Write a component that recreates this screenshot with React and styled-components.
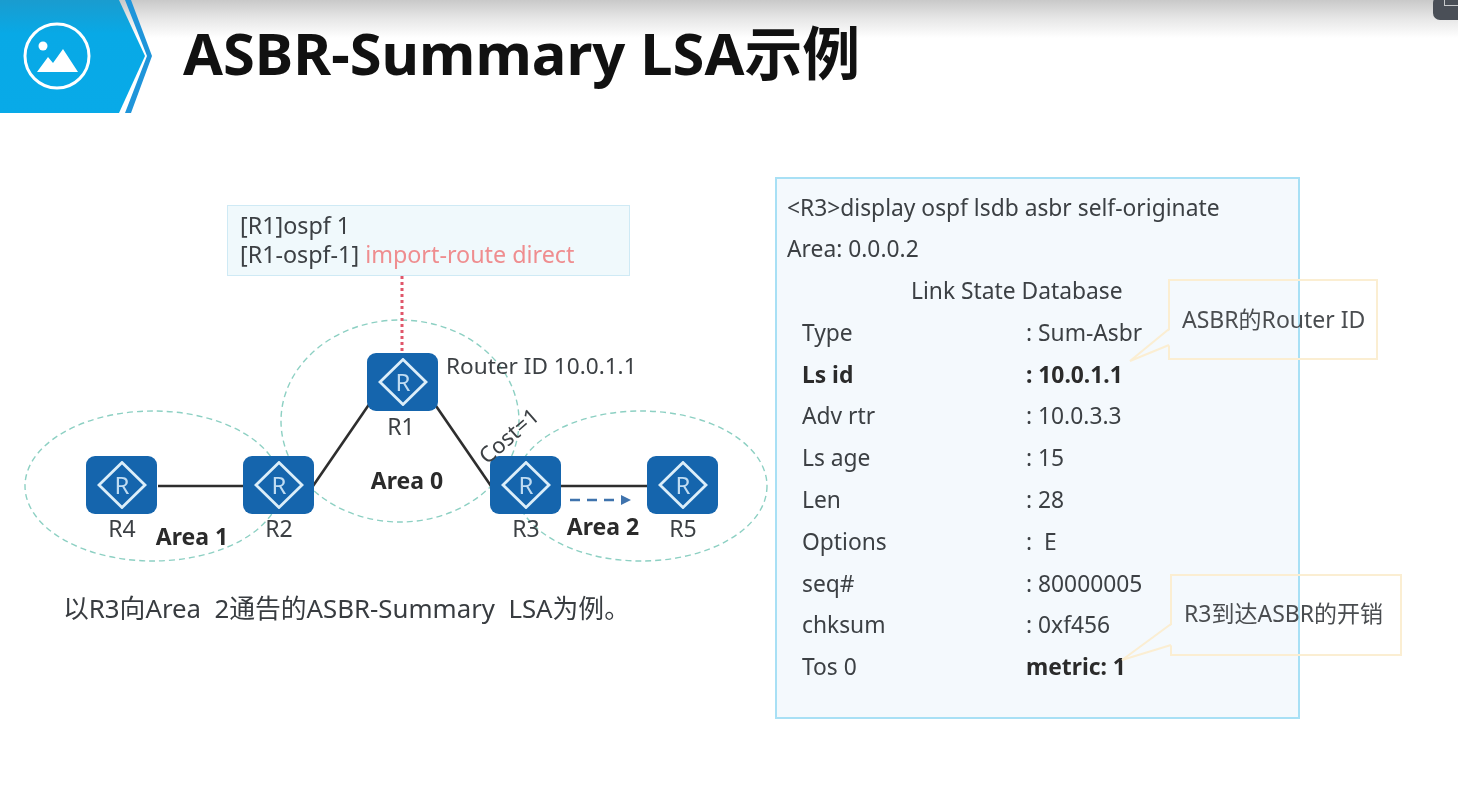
import React from 'react';
import styled, { createGlobalStyle } from 'styled-components';

const GlobalStyle = createGlobalStyle`
  html, body {
    margin: 0;
    padding: 0;
    background: #ffffff;
  }
  body {
    font-family: 'Noto Sans', 'Noto Sans CJK SC', sans-serif;
    color: #3c4044;
  }
`;

const Page = styled.div`
  position: relative;
  width: 1458px;
  height: 797px;
  overflow: hidden;
  background: linear-gradient(#c9c9c9 0, #e6e6e6 18px, #ffffff 38px);
  filter: blur(0.7px);
`;

const WindowCorner = styled.div`
  position: absolute;
  top: -4px;
  right: -10px;
  width: 35px;
  height: 24px;
  background: #4a4f57;
  border-radius: 7px;
  &::after {
    content: '';
    position: absolute;
    left: 11px;
    top: 0;
    right: 0;
    height: 9px;
    border-left: 1px solid #c8cacc;
    border-bottom: 1px solid #c8cacc;
  }
`;

const Header = styled.header`
  display: flex;
  align-items: center;
  height: 113px;
`;

const Banner = styled.svg`
  flex: none;
  width: 152px;
  height: 113px;
`;

const Title = styled.h1`
  margin: 0 0 8px 31px;
  font-size: 57.8px;
  line-height: 70px;
  font-weight: 700;
  color: #111111;
  white-space: nowrap;
`;

const Body = styled.main`
  display: flex;
  align-items: flex-start;
`;

const LeftColumn = styled.section`
  flex: none;
  width: 775px;
`;

const Diagram = styled.div`
  position: relative;
  height: 480px;
`;

const Wires = styled.svg`
  position: absolute;
  left: 0;
  top: 0;
  width: 775px;
  height: 480px;
`;

const ConfigBox = styled.div`
  position: absolute;
  left: 227px;
  top: 92px;
  width: 403px;
  height: 71px;
  box-sizing: border-box;
  padding: 5px 12px;
  background: #f0f9fc;
  border: 1.5px solid #cfeaf5;
  font-size: 23.3px;
  line-height: 29px;
  white-space: nowrap;
`;

const RedText = styled.span`
  color: #ef8d8f;
`;

const Router = styled.div`
  position: absolute;
  left: ${(p) => p.$x}px;
  top: ${(p) => p.$y}px;
  display: flex;
  align-items: center;
  justify-content: center;
  width: 71px;
  height: 58px;
  background: #1565ad;
  border-radius: 9px;
`;

const RouterGlyph = styled.svg`
  width: 50px;
  height: 48px;
`;

const Label = styled.span`
  position: absolute;
  left: ${(p) => p.$x}px;
  top: ${(p) => p.$y}px;
  transform: translate(-50%, -50%);
  font-size: 23px;
  line-height: 26px;
  white-space: nowrap;
`;

const AreaLabel = styled(Label)`
  font-weight: 700;
  color: #2b2b2b;
`;

const RouterIdLabel = styled.span`
  position: absolute;
  left: 446px;
  top: 240px;
  font-size: 22.6px;
  line-height: 26px;
  white-space: nowrap;
`;

const CostLabel = styled.span`
  position: absolute;
  left: 508px;
  top: 322px;
  transform: translate(-50%, -50%) rotate(-41deg);
  font-size: 22px;
  line-height: 26px;
  white-space: nowrap;
`;

const Caption = styled.p`
  margin: 0;
  padding-left: 63px;
  font-size: 25.8px;
  line-height: 30px;
  white-space: pre;
  color: #383c40;
`;

const Panel = styled.section`
  position: relative;
  flex: none;
  width: 525px;
  height: 542px;
  margin-top: 64px;
  box-sizing: border-box;
  padding: 7.5px 10px 0;
  background: #f4f9fd;
  border: 2px solid #a8e0f5;
  font-size: 22.8px;
  line-height: 41.8px;
  white-space: pre;
`;

const PanelLine = styled.div`
  height: 41.8px;
  padding-left: ${(p) => p.$indent || 0}px;
`;

const FieldRow = styled.div`
  display: grid;
  grid-template-columns: 224px 1fr;
  height: 41.8px;
  padding-left: 15px;
  font-weight: ${(p) => (p.$bold ? 700 : 400)};
  color: ${(p) => (p.$bold ? '#2b2b2b' : 'inherit')};
`;

const MetricValue = styled.span`
  font-weight: 700;
  color: #2b2b2b;
`;

const Callout = styled.div`
  position: absolute;
  left: ${(p) => p.$x}px;
  top: ${(p) => p.$y}px;
  width: ${(p) => p.$w}px;
  height: ${(p) => p.$h}px;
  box-sizing: border-box;
  display: flex;
  align-items: center;
  padding: 0 0 ${(p) => p.$lift}px 12px;
  border: 2px solid #fbeed2;
  font-size: 23px;
  line-height: 26px;
  color: #4a4d50;
`;

const CalloutTail = styled.svg`
  position: absolute;
  left: -42px;
  top: 44px;
  width: 44px;
  height: 46px;
  overflow: visible;
`;

const fields = [
  ['Type', ': Sum-Asbr'],
  ['Ls id', ': 10.0.1.1', true],
  ['Adv rtr', ': 10.0.3.3'],
  ['Ls age', ': 15'],
  ['Len', ': 28'],
  ['Options', ':  E'],
  ['seq#', ': 80000005'],
  ['chksum', ': 0xf456'],
];

const routers = [
  { x: 367, y: 240 },
  { x: 86, y: 343 },
  { x: 243, y: 343 },
  { x: 490, y: 343 },
  { x: 647, y: 343 },
];

const routerNames = [
  { name: 'R1', x: 401, y: 313 },
  { name: 'R4', x: 122, y: 415 },
  { name: 'R2', x: 279, y: 415 },
  { name: 'R3', x: 526, y: 415 },
  { name: 'R5', x: 683, y: 415 },
];

const RouterIcon = () => (
  <RouterGlyph viewBox="0 0 50 48">
    <path d="M25 1.5 48 24 25 46.5 2 24Z" fill="none" stroke="#dceef9" strokeWidth="2.8" />
    <text
      x="25"
      y="32.5"
      textAnchor="middle"
      fontSize="24"
      fontFamily="Noto Sans, sans-serif"
      fill="#c0dcf2"
    >
      R
    </text>
  </RouterGlyph>
);

const App = () => {
  return (
    <Page>
      <GlobalStyle />
      <WindowCorner />
      <Header>
        <Banner viewBox="0 0 152 113">
          <defs>
            <linearGradient id="bannerFill" x1="0" y1="0" x2="0" y2="1">
              <stop offset="0" stopColor="#1a9ccf" />
              <stop offset="0.3" stopColor="#08a9e6" />
              <stop offset="1" stopColor="#08aae8" />
            </linearGradient>
          </defs>
          <path d="M0 0H119L145 56 119 113H0Z" fill="url(#bannerFill)" />
          <path d="M125 0H131L152 56 131 113H125L147 56Z" fill="#1f95da" />
          <circle cx="57" cy="56" r="32" fill="none" stroke="#ffffff" strokeWidth="3" />
          <circle cx="43" cy="46" r="4.5" fill="#ffffff" />
          <path d="M37 72 48 57 53 63 63 49 78 72Z" fill="#ffffff" />
        </Banner>
        <Title>ASBR-Summary LSA示例</Title>
      </Header>
      <Body>
        <LeftColumn>
          <Diagram>
            <Wires viewBox="0 0 775 480">
              <g fill="none" stroke="#8dd0c3" strokeWidth="1.4" strokeDasharray="6 4">
                <ellipse cx="400" cy="308" rx="119" ry="101" />
                <ellipse cx="153" cy="373" rx="128" ry="75" />
                <ellipse cx="641" cy="373" rx="126" ry="75" />
              </g>
              <g fill="none" stroke="#2e2e2e" strokeWidth="2.6">
                <path d="M158 373H243" />
                <path d="M313 373 370 290" />
                <path d="M434 290 491 373" />
                <path d="M560 373H647" />
              </g>
              <path d="M402 163V240" stroke="#e0566a" strokeWidth="3" strokeDasharray="3 3" />
              <path d="M570 387H618" stroke="#3f73ad" strokeWidth="2.6" strokeDasharray="10 7" fill="none" />
              <path d="M621 382 631 387 621 392Z" fill="#3f73ad" />
            </Wires>
            <ConfigBox>
              [R1]ospf 1
              <br />
              [R1-ospf-1] <RedText>import-route direct</RedText>
            </ConfigBox>
            {routers.map((r) => (
              <Router key={r.x} $x={r.x} $y={r.y}>
                <RouterIcon />
              </Router>
            ))}
            {routerNames.map((r) => (
              <Label key={r.name} $x={r.x} $y={r.y}>
                {r.name}
              </Label>
            ))}
            <RouterIdLabel>Router ID 10.0.1.1</RouterIdLabel>
            <CostLabel>Cost=1</CostLabel>
            <AreaLabel $x={407} $y={367}>Area 0</AreaLabel>
            <AreaLabel $x={192} $y={423}>Area 1</AreaLabel>
            <AreaLabel $x={603} $y={413}>Area 2</AreaLabel>
          </Diagram>
          <Caption>以R3向Area  2通告的ASBR-Summary  LSA为例。</Caption>
        </LeftColumn>
        <Panel>
          <PanelLine>&lt;R3&gt;display ospf lsdb asbr self-originate</PanelLine>
          <PanelLine>Area: 0.0.0.2</PanelLine>
          <PanelLine $indent={124}>Link State Database</PanelLine>
          {fields.map(([name, value, bold]) => (
            <FieldRow key={name} $bold={bold}>
              <span>{name}</span>
              <span>{value}</span>
            </FieldRow>
          ))}
          <FieldRow>
            <span>Tos 0</span>
            <MetricValue>metric: 1</MetricValue>
          </FieldRow>
          <Callout $x={391} $y={100} $w={210} $h={81} $lift={2}>
            ASBR的Router ID
            <CalloutTail viewBox="0 0 44 46">
              <path d="M43 4 2 36 43 20Z" fill="#f4f9fd" />
              <path d="M41 4 2 36 41 20" fill="none" stroke="#fbeed2" strokeWidth="2" />
            </CalloutTail>
          </Callout>
          <Callout $x={393} $y={395} $w={232} $h={82} $lift={4}>
            R3到达ASBR的开销
            <CalloutTail viewBox="0 0 44 46">
              <path d="M43 4 -8 40 43 25Z" fill="#f4f9fd" />
              <path d="M41 4 -8 40 41 25" fill="none" stroke="#fbeed2" strokeWidth="2" />
            </CalloutTail>
          </Callout>
        </Panel>
      </Body>
    </Page>
  );
};

export default App;
